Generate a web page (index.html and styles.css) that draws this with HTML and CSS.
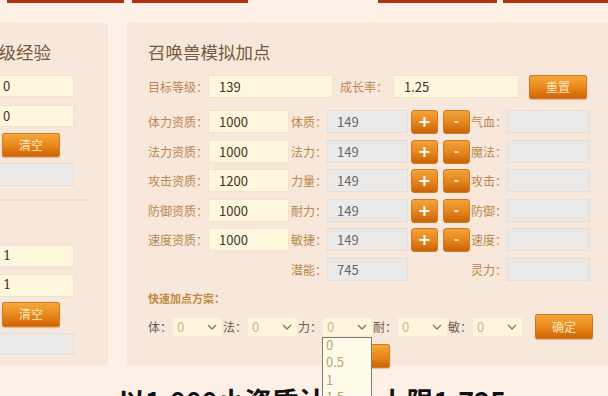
FILE: index.html
```html
<!DOCTYPE html>
<html lang="zh-CN">
<head>
<meta charset="utf-8">
<title>召唤兽模拟加点</title>
<link rel="stylesheet" href="styles.css">
</head>
<body>
<div class="topbars"><span class="bar b1"></span><span class="bar b2"></span><span class="bar b3"></span><span class="bar b4"></span></div>
<div class="content">
  <section class="side">
    <h2 class="ptitle">升级经验</h2>
    <div class="in sin s1">0</div>
    <div class="in sin s2">0</div>
    <div class="btn sbtn b-a">清空</div>
    <div class="gray sgray g-a"></div>
    <div class="divider"></div>
    <div class="in sin s3 mono">1</div>
    <div class="in sin s4 mono">1</div>
    <div class="btn sbtn b-b">清空</div>
    <div class="gray sgray g-b"></div>
  </section>
  <section class="main">
    <h2 class="ptitle">召唤兽模拟加点</h2>
    <div class="row1">
      <span class="lab l1">目标等级<span class="c">：</span></span>
      <div class="in w1">139</div>
      <span class="lab l2">成长率<span class="c">：</span></span>
      <div class="in w2">1.25</div>
      <div class="btn rbtn">重置</div>
    </div>
    <div class="grid">
      <span class="lab ra">体力资质<span class="c">：</span></span><div class="in">1000</div><span class="lab ra">体质<span class="c">：</span></span><div class="gray">149</div><span class="pbtn plus">+</span><span class="pbtn minus">-</span><span class="lab ra">气血<span class="c">：</span></span><div class="gray"></div>
      <span class="lab ra">法力资质<span class="c">：</span></span><div class="in">1000</div><span class="lab ra">法力<span class="c">：</span></span><div class="gray">149</div><span class="pbtn plus">+</span><span class="pbtn minus">-</span><span class="lab ra">魔法<span class="c">：</span></span><div class="gray"></div>
      <span class="lab ra">攻击资质<span class="c">：</span></span><div class="in">1200</div><span class="lab ra">力量<span class="c">：</span></span><div class="gray">149</div><span class="pbtn plus">+</span><span class="pbtn minus">-</span><span class="lab ra">攻击<span class="c">：</span></span><div class="gray"></div>
      <span class="lab ra">防御资质<span class="c">：</span></span><div class="in">1000</div><span class="lab ra">耐力<span class="c">：</span></span><div class="gray">149</div><span class="pbtn plus">+</span><span class="pbtn minus">-</span><span class="lab ra">防御<span class="c">：</span></span><div class="gray"></div>
      <span class="lab ra">速度资质<span class="c">：</span></span><div class="in">1000</div><span class="lab ra">敏捷<span class="c">：</span></span><div class="gray">149</div><span class="pbtn plus">+</span><span class="pbtn minus">-</span><span class="lab ra">速度<span class="c">：</span></span><div class="gray"></div>
      <span class="cell-empty"></span><span class="cell-empty"></span><span class="lab ra">潜能<span class="c">：</span></span><div class="gray">745</div><span class="cell-empty"></span><span class="cell-empty"></span><span class="lab ra">灵力<span class="c">：</span></span><div class="gray"></div>
    </div>
    <div class="qlabel">快速加点方案<span class="c">：</span></div>
    <div class="quick">
      <span class="qlab">体<span class="c">：</span></span><div class="sel">0<svg class="chev" viewBox="0 0 10 6" width="10" height="6"><path d="M1 1 L5 5 L9 1" fill="none" stroke="#8b7b55" stroke-width="1.4"/></svg></div>
      <span class="qlab">法<span class="c">：</span></span><div class="sel">0<svg class="chev" viewBox="0 0 10 6" width="10" height="6"><path d="M1 1 L5 5 L9 1" fill="none" stroke="#8b7b55" stroke-width="1.4"/></svg></div>
      <span class="qlab">力<span class="c">：</span></span><div class="sel open">0<svg class="chev" viewBox="0 0 10 6" width="10" height="6"><path d="M1 1 L5 5 L9 1" fill="none" stroke="#8b7b55" stroke-width="1.4"/></svg>
        <ul class="dropdown"><li>0</li><li>0.5</li><li>1</li><li>1.5</li></ul>
      </div>
      <span class="qlab">耐<span class="c">：</span></span><div class="sel">0<svg class="chev" viewBox="0 0 10 6" width="10" height="6"><path d="M1 1 L5 5 L9 1" fill="none" stroke="#8b7b55" stroke-width="1.4"/></svg></div>
      <span class="qlab">敏<span class="c">：</span></span><div class="sel">0<svg class="chev" viewBox="0 0 10 6" width="10" height="6"><path d="M1 1 L5 5 L9 1" fill="none" stroke="#8b7b55" stroke-width="1.4"/></svg></div>
      <div class="btn qbtn">确定</div>
    </div>
    <div class="calc-row"><div class="btn cbtn">计算</div></div>
  </section>
</div>
<div class="subtitle">以1.000小资质计算，上限1.725</div>
</body>
</html>
```

FILE: styles.css
```css
* { box-sizing: border-box; margin: 0; padding: 0; }
html, body { width: 608px; height: 396px; overflow: hidden; }
body {
  background: #fcf0e7;
  font-family: "Noto Sans CJK SC", "Noto Sans", sans-serif;
  font-size: 12px;
  color: #b9874e;
}
.c { font-family: "Noto Sans CJK TC", "Noto Sans CJK SC", sans-serif; }
.topbars { display: flex; height: 3px; }
.bar { height: 3px; background: #b3300f; }
.b1 { margin-left: 7px; width: 117px; }
.b2 { margin-left: 8px; width: 116px; }
.b3 { margin-left: 130px; width: 119px; }
.b4 { margin-left: 6px; flex: 1; }

.content { display: flex; margin-top: 20px; height: 343px; }
.side {
  margin-left: -40px; width: 148px; flex-shrink: 0;
  background: #f8e7db;
  padding: 17px 0 0 21px;
  display: flex; flex-direction: column; align-items: flex-start;
}
.main {
  margin-left: 19px; flex: 1;
  background: #f8e7db;
  padding: 17px 0 0 21px;
}
.ptitle {
  font-size: 17.5px; font-weight: normal; line-height: 24px; height: 24px;
  color: #7a5a3c; white-space: nowrap;
}

.in {
  background: #fef7de; border: 1px solid #f1e4c9;
  color: #3b352c; font-size: 13px; line-height: 21px; height: 23px;
  padding-left: 10px; white-space: nowrap;
}
.gray {
  background: #eceae8; border: 1px solid #e6ddd4;
  color: #666; font-size: 13px; line-height: 21px; height: 23px;
  padding-left: 9px;
}
.btn {
  background: linear-gradient(#f5a83a, #e8861a 55%, #cf6407);
  border: 1px solid #d47a22;
  border-radius: 2px;
  color: #fde6bd; font-size: 12px; text-align: center;
  width: 58px; height: 24px; line-height: 22px;
  box-shadow: 0 1px 1px rgba(160, 80, 10, 0.3);
}
.mono { font-family: "DejaVu Serif", "Liberation Serif", serif; }

.sin { margin-left: 11px; width: 82px; height: 22px; line-height: 20px; }
.s1 { margin-top: 11px; }
.s2 { margin-top: 8px; }
.sbtn { margin-left: 21px; }
.b-a { margin-top: 6px; }
.sgray { margin-left: 11px; width: 82px; }
.g-a { margin-top: 6px; }
.divider { margin-top: 13px; width: 107px; height: 2px; background: #eddacb; }
.s3 { margin-top: 44px; }
.s4 { margin-top: 7px; height: 23px; }
.b-b { margin-top: 5px; height: 25px; }
.g-b { margin-top: 6px; height: 22px; }

.row1 { display: flex; align-items: center; margin-top: 11px; height: 23px; }
.lab { white-space: nowrap; line-height: 23px; }
.l1 { width: 60px; }
.w1 { width: 125px; }
.l2 { width: 60px; padding-left: 7px; }
.w2 { width: 126px; }
.rbtn { margin-left: 10px; }

.grid {
  display: grid; margin-top: 12px;
  grid-template-columns: 60px 81px 38px 81px 30px 32px 37px 83px;
  grid-auto-rows: 23px; row-gap: 6.5px;
}
.ra { text-align: right; }
.pbtn {
  width: 27px; height: 24px; justify-self: end;
  background: linear-gradient(#f2a33a, #e3841b 55%, #c96208);
  border: 1px solid #d07a26; border-radius: 3px;
  color: #fff; font-weight: bold; font-size: 16px; line-height: 21px; text-align: center;
  font-family: "DejaVu Sans", sans-serif;
}
.minus { color: #fbe3c0; font-size: 13px; }

.qlabel {
  margin-top: 9.5px; line-height: 16px; height: 16px;
  font-size: 11px; font-weight: bold; color: #c08a3f;
}
.quick { display: flex; align-items: center; margin-top: 8px; height: 25px; }
.qlab { width: 25px; color: #6d5c48; white-space: nowrap; }
.sel {
  position: relative; width: 49px; height: 18px; margin-right: 1px;
  background: #fef6dc; color: #c8b98c; font-size: 13px; line-height: 18px;
  padding-left: 4px;
}
.chev { position: absolute; right: 5px; top: 6px; }
.dropdown {
  position: absolute; left: -1px; top: 19px; width: 50px; height: 70px;
  background: #fffbea; border: 1px solid #857a6c;
  list-style: none; z-index: 2;
  padding: 0 0 0 3px; color: #b3a47a; font-size: 13px; line-height: 17.5px;
}
.dropdown li:first-child { margin-top: -2px; }
.qbtn { margin-left: 12px; height: 25px; line-height: 23px; }
.calc-row { margin-top: 5px; padding-left: 184px; }

.subtitle {
  margin-top: 21px; padding-left: 118px;
  font-size: 27px; line-height: 27px; font-weight: bold; color: #111;
  white-space: nowrap;
}
```
